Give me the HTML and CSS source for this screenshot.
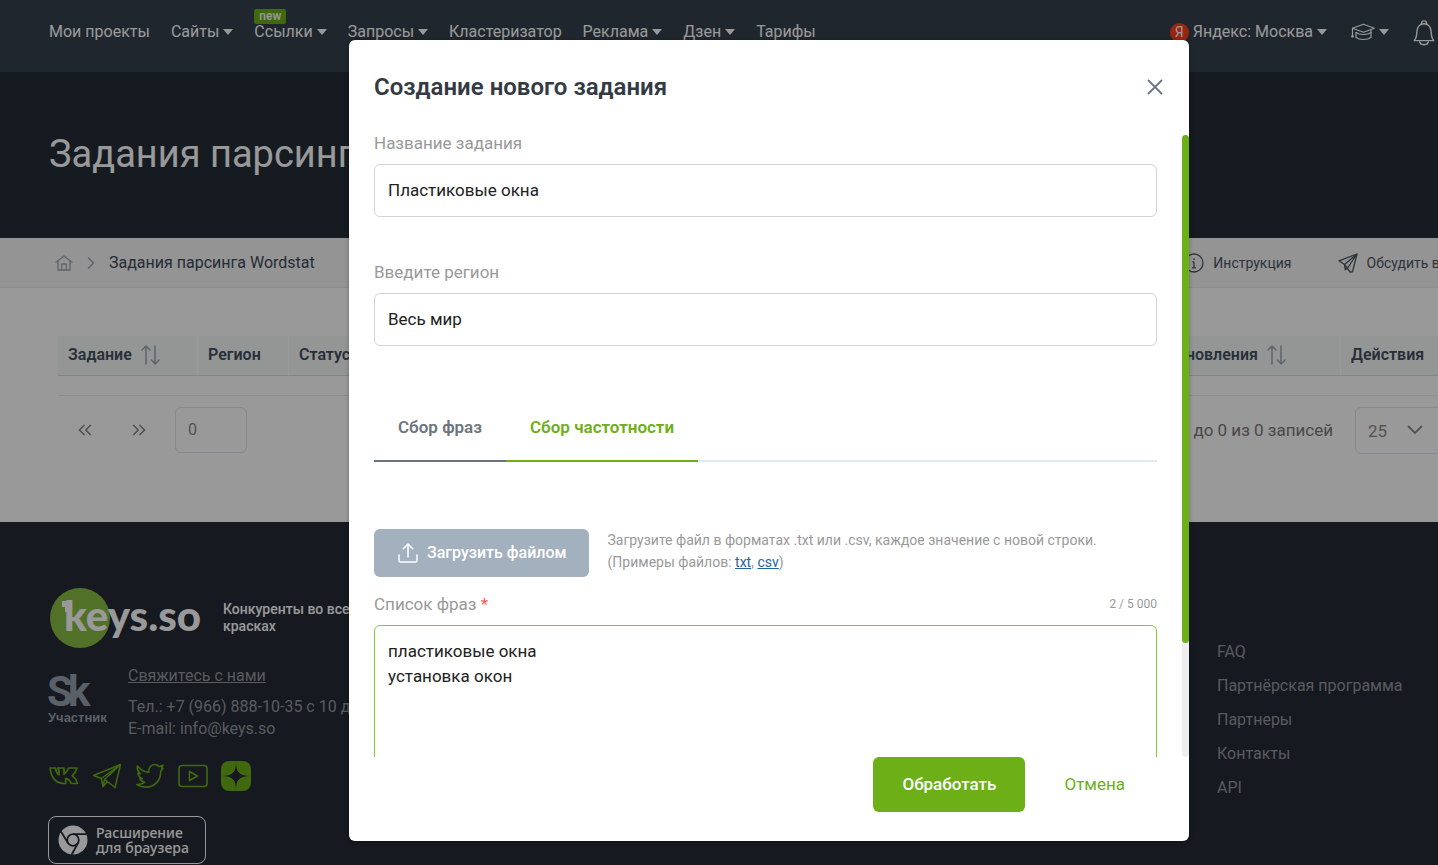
FILE: index.html
```html
<!DOCTYPE html>
<html lang="ru">
<head>
<meta charset="utf-8">
<title>Задания парсинга Wordstat</title>
<link rel="stylesheet" href="styles.css">
</head>
<body>
<div class="page">
  <header class="topbar">
    <nav class="menu">
      <a href="#">Мои проекты</a>
      <a href="#" class="drop">Сайты</a>
      <a href="#" class="drop">Ссылки<span class="badge">new</span></a>
      <a href="#" class="drop">Запросы</a>
      <a href="#">Кластеризатор</a>
      <a href="#" class="drop">Реклама</a>
      <a href="#" class="drop">Дзен</a>
      <a href="#">Тарифы</a>
    </nav>
    <div class="tools">
      <a href="#" class="drop region"><span class="ya">Я</span>Яндекс: Москва</a>
      <a href="#" class="drop learn" aria-label="Обучение">
        <svg width="24" height="18" viewBox="0 0 24 18" fill="none" stroke="currentColor" stroke-width="1.2" stroke-linejoin="round" stroke-linecap="round"><path d="M12.500 1.200 23.300 5.200 12.500 9.300 1.500 5.200z"/><path d="M5 9.500v5c2 1.500 4.300 2 7.500 2s5.500-.5 7.500-2v-7.500"/><path d="M5 9.500c2-1.200 13-1.200 15 0"  stroke-opacity="0"/><path d="M5 9.500c2 1.500 4.600 2 7.500 2s5.500-.5 7.500-2"/><path d="M1.500 5.200v6.500M1.500 11.500l-.8 2.300h1.600z"/></svg>
      </a>
      <button class="bell" aria-label="Уведомления">
        <svg width="22" height="26" viewBox="0 0 22 26" fill="none" stroke="currentColor" stroke-width="1.400" stroke-linecap="round" stroke-linejoin="round"><path d="M1.200 20.600c2.400-2.600 2.600-5 2.700-9.200C4 6.800 7 3.800 11 3.800s7 3 7.100 7.600c.1 4.200.3 6.600 2.700 9.200z"/><path d="M8.500 4V3a2.500 2.100 0 0 1 5 0v1"/><path d="M6.700 22c.5 1.800 2.200 2.800 4.300 2.800s3.800-1 4.300-2.800"/></svg>
      </button>
    </div>
  </header>

  <section class="hero"><h1>Задания парсинга Wordstat</h1></section>

  <div class="crumbs">
    <a href="#" class="home" aria-label="Главная">
      <svg width="18" height="16" viewBox="0 0 18 16" fill="none" stroke="currentColor" stroke-width="1.300" stroke-linejoin="round" stroke-linecap="round"><path d="M1 7.200 9 1l8 6.200"/><path d="M3 6v9h12V6"/><path d="M6.800 15V9h4.400v6"/></svg>
    </a>
    <svg class="sep" width="8" height="12" viewBox="0 0 8 12" fill="none" stroke="currentColor" stroke-width="1.500" stroke-linecap="round"><path d="M1.500 1 6.500 6l-5 5"/></svg>
    <span class="here">Задания парсинга Wordstat</span>
    <div class="crumb-links">
      <a href="#"><svg width="20" height="20" viewBox="0 0 20 20" fill="none" stroke="currentColor" stroke-width="1.300"><circle cx="10" cy="10" r="9"/><path d="M10 5.300v1.600M10 8.800v6M8.300 8.800H10M8 14.800h4"/></svg>Инструкция</a>
      <a href="#"><svg width="20" height="20" viewBox="0 0 20 20" fill="none" stroke="currentColor" stroke-width="1.300" stroke-linejoin="round"><path d="M19 1 1 7.800l5.500 3.700 5.600 7.500 2.400-.2z"/><path d="M19 1 6.500 11.500l.8 5.300 3-2.700M19 1l-8.700 13"/></svg>Обсудить в чате</a>
    </div>
  </div>

  <main class="content">
    <table class="grid">
      <thead>
        <tr>
          <th class="c-task">Задание<svg class="sort" width="19" height="20" viewBox="0 0 19 20" fill="none" stroke="currentColor" stroke-width="1.500" stroke-linecap="round" stroke-linejoin="round"><path d="M5 19V1M1 5l4-4 4 4M14 1v18M10.500 15l3.700 4 3.800-4"/></svg></th>
          <th class="c-region">Регион</th>
          <th class="c-status">Статус</th>
          <th class="c-date">Дата обновления<svg class="sort" width="19" height="20" viewBox="0 0 19 20" fill="none" stroke="currentColor" stroke-width="1.500" stroke-linecap="round" stroke-linejoin="round"><path d="M5 19V1M1 5l4-4 4 4M14 1v18M10.500 15l3.700 4 3.800-4"/></svg></th>
          <th class="c-act">Действия</th>
        </tr>
      </thead>
      <tbody><tr><td colspan="5"></td></tr></tbody>
    </table>
    <div class="pager">
      <button class="step" aria-label="Предыдущая страница"><svg width="14" height="12" viewBox="0 0 14 12" fill="none" stroke="currentColor" stroke-width="1.600"><path d="M6.500 1 1.500 6l5 5M12.800 1l-5 5 5 5"/></svg></button>
      <button class="step" aria-label="Следующая страница"><svg width="14" height="12" viewBox="0 0 14 12" fill="none" stroke="currentColor" stroke-width="1.600"><path d="m1.200 1 5 5-5 5M7.500 1l5 5-5 5"/></svg></button>
      <input class="page-no" type="text" value="0" aria-label="Номер страницы">
      <span class="total">с 0 до 0 из 0 записей</span>
      <div class="size">
        <select aria-label="Записей на странице"><option>25</option></select>
        <svg width="16" height="10" viewBox="0 0 16 10" fill="none" stroke="currentColor" stroke-width="1.800" stroke-linecap="round"><path d="m1.500 1.500 6.500 6.500 6.500-6.500"/></svg>
      </div>
    </div>
  </main>

  <footer class="footer">
    <div class="about">
      <div class="brand">
        <svg width="154" height="60" viewBox="0 0 154 60" role="img" aria-label="keys.so"><circle cx="30" cy="30" r="30" fill="#88bb43"/><path d="M12 13h10v6h-3v5h-4v-5h-3z" fill="#fff"/><text x="14" y="43" class="logo-text">keys.so</text></svg>
        <p class="slogan">Конкуренты во всех<br>красках</p>
      </div>
      <div class="contacts">
        <svg width="60" height="52" viewBox="0 0 60 52" role="img" aria-label="Sk Участник"><text x="-1" y="33" class="sk">S</text><text x="20" y="33" class="sk">k</text><text x="0" y="49" class="sk-note">Участник</text></svg>
        <div>
          <a class="write" href="#">Свяжитесь с нами</a>
          <p class="phone">Тел.: +7 (966) 888-10-35 с 10 до 19<br>E-mail: info@keys.so</p>
        </div>
      </div>
      <div class="social">
        <a href="#" aria-label="ВКонтакте"><svg width="30" height="30" viewBox="0 0 30 30" fill="none" stroke="currentColor" stroke-width="1.700" stroke-linejoin="round"><path d="M1 7h5.200c.8 3.500 2.200 5.700 3.800 6.800V9.500L8.500 7H15v6.300c2-1.200 3.400-3.400 4.600-6.300H28c-.7 3-2.600 5.800-4.800 7.700 2.500 2 4.400 4.600 5.300 7.800h-6.200c-1.200-2.800-3.100-4.600-5.600-5.200v5.200h-2C7.300 22.500 2 16.800 1 7z"/></svg></a>
        <a href="#" aria-label="Телеграм"><svg width="30" height="30" viewBox="0 0 30 30" fill="none" stroke="currentColor" stroke-width="1.500" stroke-linejoin="round"><path d="M28.500 3.500 1.500 14.500l7.800 3 1.700 8 4.500-5 7.500 6z"/><path d="M28.500 3.500 9.300 17.500M28.500 3.500 12.500 18.500l-1.500 7M12.500 18.500l3 2"/></svg></a>
        <a href="#" aria-label="Твиттер"><svg width="30" height="30" viewBox="0 0 30 30" fill="none" stroke="currentColor" stroke-width="1.600" stroke-linejoin="round"><path d="M2.500 5c3 4 7 6 11.500 6.300C13 7 16 3.500 19.500 3.500c2 0 3.500.8 4.500 2l4-1.200-1.400 2.800 1.400.2-2.300 3c.3 9.200-6.200 15.800-14.400 15.800-4 0-7-.9-9.500-2.500 3.200 0 5.800-.8 8-2.400-2.600-.3-4.300-1.600-5-3.600h2.400C4.700 16.600 3 14.600 3 12l2.400.8C3 10.500 1.400 8 2.500 5z"/></svg></a>
        <a href="#" aria-label="Ютуб"><svg width="30" height="30" viewBox="0 0 30 30" fill="none" stroke="currentColor" stroke-width="1.600" stroke-linejoin="round"><rect x="1" y="4.500" width="28" height="21" rx="3"/><path d="M11.500 10.500v9l8-4.500z"/></svg></a>
        <a href="#" aria-label="Дзен"><svg width="30" height="30" viewBox="0 0 30 30"><rect width="30" height="30" rx="8" fill="currentColor"/><path class="star" d="M15 1c.3 10 2.500 13.700 14 14-11.500.3-13.700 4-14 14-.3-10-2.500-13.700-14-14C12.500 14.700 14.700 11 15 1z"/><circle class="star" cx="15" cy="15" r="4.500"/></svg></a>
      </div>
      <a class="extension" href="#">
        <svg width="30" height="30" viewBox="0 0 30 30"><circle cx="15" cy="15" r="14.500" fill="currentColor"/><g fill="none" stroke="#252b36" stroke-width="1.800"><circle cx="15" cy="15" r="5.800"/><path d="M15 9.200h13.500M10 18 3 6.500M20 18l-6.500 12"/></g></svg>
        <span>Расширение<br>для браузера</span>
      </a>
    </div>
    <ul class="links">
      <li><a href="#">FAQ</a></li>
      <li><a href="#">Партнёрская программа</a></li>
      <li><a href="#">Партнеры</a></li>
      <li><a href="#">Контакты</a></li>
      <li><a href="#">API</a></li>
    </ul>
  </footer>

  <div class="overlay">
    <form class="modal" role="dialog" aria-labelledby="modal-title">
      <div class="modal-head">
        <h2 id="modal-title">Создание нового задания</h2>
        <button type="button" class="close" aria-label="Закрыть"><svg width="16" height="16" viewBox="0 0 16 16" stroke="currentColor" stroke-width="1.800" fill="none"><path d="m1 1 14 14M15 1 1 15"/></svg></button>
      </div>
      <div class="modal-body">
        <div class="fields">
          <label class="label" for="task-name">Название задания</label>
          <input class="field" id="task-name" type="text" value="Пластиковые окна">
          <label class="label" for="task-region">Введите регион</label>
          <input class="field" id="task-region" type="text" value="Весь мир">
          <div class="tabs" role="tablist">
            <button type="button" class="tab" role="tab" aria-selected="false">Сбор фраз</button>
            <button type="button" class="tab active" role="tab" aria-selected="true">Сбор частотности</button>
          </div>
          <div class="upload">
            <button type="button" class="upload-btn"><svg width="20" height="20" viewBox="0 0 20 20" fill="none" stroke="currentColor" stroke-width="1.500" stroke-linecap="round" stroke-linejoin="round"><path d="M10 14V1.200M5.300 5.700 10 1l4.700 4.700M1 12v5.500A1.500 1.500 0 0 0 2.500 19h15a1.500 1.500 0 0 0 1.500-1.500V12"/></svg>Загрузить файлом</button>
            <p class="hint">Загрузите файл в форматах .txt или .csv, каждое значение с новой строки.<br>(Примеры файлов: <a href="#">txt</a>, <a href="#">csv</a>)</p>
          </div>
          <div class="list-head">
            <label class="list-label" for="phrases">Список фраз <span class="req">*</span></label>
            <span class="count">2 / 5 000</span>
          </div>
          <textarea class="phrases" id="phrases">пластиковые окна
установка окон</textarea>
        </div>
        <div class="track"><div class="thumb"></div></div>
      </div>
      <div class="modal-foot">
        <button type="submit" class="primary">Обработать</button>
        <button type="button" class="cancel">Отмена</button>
      </div>
    </form>
  </div>
</div>
</body>
</html>
```

FILE: styles.css
```css
*, *::before, *::after { box-sizing: border-box; }
body {
  margin: 0;
  height: 100vh;
  overflow: hidden;
  font: 16px/20px Roboto, "Noto Sans", sans-serif;
  color: #4b5563;
  background: #252b36;
}
h1, h2, p, ul { margin: 0; padding: 0; }
ul { list-style: none; }
a { color: inherit; text-decoration: none; }
button { font: inherit; color: inherit; background: none; border: 0; padding: 0; cursor: pointer; }
svg { display: block; flex: none; }

/* The page keeps a 100px bleed past the right edge of the window. */
.page { position: relative; width: calc(100% + 100px); min-height: 100vh; }

.topbar {
  display: flex;
  justify-content: space-between;
  height: 72px;
  padding: 20px 103px 0 49px;
  background: #35404b;
  color: #fff;
  line-height: 24px;
}
.menu { display: flex; gap: 21px; }
.menu a { position: relative; }
.drop { display: flex; align-items: center; height: 24px; }
.drop::after {
  content: "";
  margin-left: 4px;
  border: 5px solid transparent;
  border-top: 6px solid currentColor;
  border-bottom: 0;
}
.badge {
  position: absolute;
  left: 0;
  top: -11px;
  padding: 0 5px;
  border-radius: 2px;
  background: #6caf17;
  font-size: 12px;
  font-weight: 500;
  line-height: 15px;
}
.tools { display: flex; gap: 24px; }
.ya {
  width: 19px;
  height: 19px;
  margin-right: 4px;
  border-radius: 50%;
  background: #fc3f1d;
  font-size: 14px;
  line-height: 19px;
  text-align: center;
}
.bell { height: 22px; }

.hero { padding: 58px 49px 60px; background: #262d37; color: #fff; }
.hero h1 { font-size: 38px; font-weight: 400; line-height: 48px; }

.crumbs {
  display: flex;
  align-items: center;
  height: 50px;
  padding: 0 49px 0 55px;
  background: #f7f7f7;
  border-bottom: 1px solid #ececec;
}
.home { color: #9ba7b5; }
.sep { margin: 0 14px; color: #9ba7b5; }
.here { color: #3f4a59; }
.crumb-links { display: flex; gap: 46px; margin: 0 17px 0 auto; font-size: 14px; }
.crumb-links a { display: flex; align-items: center; gap: 9px; }

.content { height: 234px; padding: 48px 58px 0; background: #fff; }
.grid { width: 100%; table-layout: fixed; border-collapse: separate; border-spacing: 0; }
.grid th {
  height: 40px;
  padding: 0 0 2px 10px;
  background: #f7fbfa;
  border-right: 1px solid #fff;
  border-bottom: 1px solid #dadada;
  color: #434f60;
  font-weight: 600;
  text-align: left;
  white-space: nowrap;
}
.grid td { height: 20px; padding: 0; border-bottom: 1px solid #ebebeb; }
.c-task { width: 140px; }
.c-region { width: 91px; }
.c-date { width: 224px; }
.c-act { width: 139px; }
.sort { display: inline-block; margin: -4px 0 -4px 9px; vertical-align: middle; color: #9ba7b5; }
.pager { display: flex; align-items: flex-start; padding-top: 11px; line-height: 46px; }
.step { display: flex; justify-content: center; align-items: center; width: 54px; height: 46px; color: #80878f; }
.page-no {
  width: 72px;
  height: 46px;
  margin-left: 9px;
  padding: 0 12px;
  border: 1px solid #dfe2e8;
  border-radius: 6px;
  background: #fff;
  color: #8b8b8b;
  font: inherit;
}
.total { margin-left: auto; font-size: 17px; color: #7a7a7a; }
.size { position: relative; width: 125px; margin-left: 22px; color: #8b8b8b; }
.size select {
  display: block;
  width: 100%;
  height: 47px;
  padding: 0 12px 2px;
  appearance: none;
  border: 1px solid #dfe2e8;
  border-radius: 6px;
  background: #fff;
  color: inherit;
  font: inherit;
  font-size: 17px;
}
.size svg { position: absolute; left: 52px; top: 18px; }

.footer {
  display: flex;
  justify-content: space-between;
  padding: 66px 48px 40px;
  background: #252b36;
  color: #94989c;
}
.brand { display: flex; align-items: center; gap: 19px; padding-left: 2px; }
.logo-text { font: 900 42px Lato, sans-serif; fill: #fff; }
.slogan { color: #fff; font-size: 14px; font-weight: 500; line-height: 17px; }
.contacts { display: flex; gap: 20px; margin-top: 18px; color: #94989c; }
.contacts > svg { margin-top: 7px; color: #97a0ac; }
.sk { font: 700 42px Roboto, sans-serif; fill: currentColor; }
.sk-note { font: 700 13px "Liberation Sans", sans-serif; fill: currentColor; }
.write { text-decoration: underline; }
.phone { margin-top: 10px; line-height: 22px; }
.social { display: flex; gap: 13px; margin-top: 21px; padding-left: 1px; color: #6caf17; }
.star { fill: #252b36; }
.extension {
  display: inline-flex;
  align-items: center;
  gap: 8px;
  height: 48px;
  margin-top: 25px;
  padding: 0 16px 0 9px;
  border: 1px solid #fff;
  border-radius: 8px;
  color: #fff;
  font: 500 14px/15px "Noto Sans", sans-serif;
}
.links { display: flex; flex-direction: column; gap: 14px; width: 273px; padding-top: 54px; }

.overlay {
  position: absolute;
  inset: 0;
  display: flex;
  justify-content: center;
  align-items: flex-start;
  padding-top: 40px;
  background: rgba(0, 0, 0, .4);
}
.modal {
  width: 840px;
  padding-bottom: 29px;
  border-radius: 6px;
  background: #fff;
  box-shadow: 0 1px 4px rgba(0, 0, 0, .3);
}
.modal-head { display: flex; align-items: center; justify-content: space-between; height: 95px; padding: 0 26px 2px 25px; }
.modal-head h2 { font-size: 24px; font-weight: 600; line-height: 32px; color: #343a43; }
.close { color: #6c7683; }
.modal-body { display: flex; height: 622px; }
.fields { flex: 1; padding: 0 25px; overflow: hidden; }
.label { display: block; margin-bottom: 12px; font-size: 17px; line-height: 17px; color: #999; }
.field {
  display: block;
  width: 100%;
  height: 53px;
  margin-bottom: 47px;
  padding: 0 13px 2px;
  border: 1px solid #ced4da;
  border-radius: 6px;
  color: #212121;
  font: inherit;
  font-size: 17px;
}
.tabs { display: flex; border-bottom: 2px solid #dee9f2; }
.tab {
  height: 69px;
  margin-bottom: -2px;
  padding: 0 24px;
  border-bottom: 2px solid #6c737d;
  font-size: 17px;
  font-weight: 600;
  color: #6c757d;
}
.tab.active { border-color: #6caf17; color: #6caf17; }
.upload { display: flex; align-items: flex-start; gap: 19px; margin-top: 67px; }
.upload-btn {
  display: flex;
  align-items: center;
  gap: 9px;
  height: 48px;
  padding: 0 22px 0 24px;
  border-radius: 6px;
  background: #a3b0be;
  color: #fff;
  font-weight: 500;
}
.hint { font-size: 14px; line-height: 22px; color: #999; }
.hint a { color: #2563a0; text-decoration: underline; }
.list-head { display: flex; justify-content: space-between; align-items: center; margin: 17px 0 11px; color: #999; }
.list-label { font-size: 17px; }
.req { color: #ff5757; }
.count { font-size: 12px; }
.phrases {
  display: block;
  width: 100%;
  height: 230px;
  padding: 13px;
  resize: none;
  border: 1px solid #84c72f;
  border-radius: 6px;
  outline: 0;
  color: #212121;
  font: inherit;
  font-size: 17px;
  line-height: 25px;
}
.track { width: 7px; border-radius: 4px; background: #eee; }
.thumb { height: 508px; border-radius: 4px; background: #6caf17; }
.modal-foot { display: flex; justify-content: flex-end; gap: 10px; padding-right: 35px; }
.primary, .cancel { height: 55px; padding: 0 29px 2px; border-radius: 6px; font-size: 17px; }
.primary { background: #6caf17; color: #fff; font-weight: 500; }
.cancel { color: #6caf17; }
```
